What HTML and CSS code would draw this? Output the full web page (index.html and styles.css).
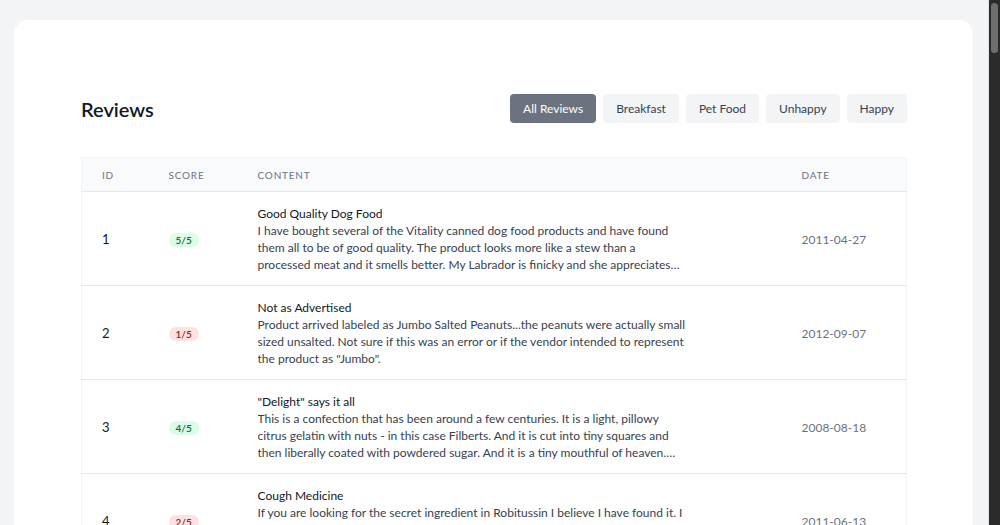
FILE: index.html
```html
<!DOCTYPE html>
<html lang="en">
<head>
<meta charset="utf-8">
<title>Reviews</title>
<link rel="stylesheet" href="styles.css">
</head>
<body>
<div class="viewport">
<main class="card">
  <header class="toolbar">
    <h1 class="title">Reviews</h1>
    <nav class="filters">
      <button class="filter active">All Reviews</button>
      <button class="filter">Breakfast</button>
      <button class="filter">Pet Food</button>
      <button class="filter">Unhappy</button>
      <button class="filter">Happy</button>
    </nav>
  </header>
  <table class="reviews">
    <colgroup>
      <col class="c-id"><col class="c-score"><col class="c-content"><col class="c-date">
    </colgroup>
    <thead>
      <tr><th>ID</th><th>Score</th><th>Content</th><th>Date</th></tr>
    </thead>
    <tbody>
      <tr>
        <td class="id">1</td>
        <td><span class="badge good">5/5</span></td>
        <td><div class="r-title">Good Quality Dog Food</div><div class="r-text">I have bought several of the Vitality canned dog food products and have found them all to be of good quality. The product looks more like a stew than a processed meat and it smells better. My Labrador is finicky and she appreciates this product better than most.</div></td>
        <td class="date">2011-04-27</td>
      </tr>
      <tr>
        <td class="id">2</td>
        <td><span class="badge bad">1/5</span></td>
        <td><div class="r-title">Not as Advertised</div><div class="r-text">Product arrived labeled as Jumbo Salted Peanuts...the peanuts were actually small sized unsalted. Not sure if this was an error or if the vendor intended to represent the product as "Jumbo".</div></td>
        <td class="date">2012-09-07</td>
      </tr>
      <tr>
        <td class="id">3</td>
        <td><span class="badge good">4/5</span></td>
        <td><div class="r-title">"Delight" says it all</div><div class="r-text">This is a confection that has been around a few centuries. It is a light, pillowy citrus gelatin with nuts - in this case Filberts. And it is cut into tiny squares and then liberally coated with powdered sugar. And it is a tiny mouthful of heaven. Not too chewy, and very flavorful.</div></td>
        <td class="date">2008-08-18</td>
      </tr>
      <tr>
        <td class="id">4</td>
        <td><span class="badge bad">2/5</span></td>
        <td><div class="r-title">Cough Medicine</div><div class="r-text">If you are looking for the secret ingredient in Robitussin I believe I have found it. I got this in addition to the Root Beer Extract I ordered (which was good) and made some cherry soda. The flavor is very medicinal.</div></td>
        <td class="date">2011-06-13</td>
      </tr>
      <tr>
        <td class="id">5</td>
        <td><span class="badge good">5/5</span></td>
        <td><div class="r-title">Great taffy</div><div class="r-text">Great taffy at a great price. There was a wide assortment of yummy taffy. Delivery was very quick. If your a taffy lover, this is a deal.</div></td>
        <td class="date">2012-10-21</td>
      </tr>
    </tbody>
  </table>
</main>
</div>
<div class="scrollbar"><div class="thumb"></div></div>
</body>
</html>
```

FILE: styles.css
```css
html { background: #f3f4f6; }
body {
  margin: 0;
  height: 100vh;
  display: flex;
  overflow: hidden;
  font-family: Lato, "Noto Sans", sans-serif;
  color: #111827;
}
.viewport {
  flex: 1;
  min-width: 0;
  overflow: hidden;
  padding: 20px 15px 40px 14px;
}
.scrollbar {
  width: 12px;
  flex: none;
  background: #2b2b2b;
  border-left: 1px solid #e2e3e5;
  box-sizing: border-box;
  padding: 3px 2px 0 2px;
}
.thumb {
  height: 50px;
  background: #6e6e6e;
  border-radius: 4px;
}
.card {
  background: #fff;
  border-radius: 14px;
  padding: 74px 66px 60px 67px;
}
.toolbar {
  display: flex;
  align-items: center;
  justify-content: space-between;
  margin-bottom: 34px;
}
.title {
  margin: 0;
  font-size: 20px;
  font-weight: 600;
  color: #111827;
}
.filters { display: flex; gap: 7px; }
.filter {
  font-family: inherit;
  font-size: 12px;
  height: 29px;
  padding: 0 13px;
  border: 0;
  border-radius: 4px;
  background: #f3f4f6;
  color: #374151;
}
.filter.active { background: #6b7280; color: #fff; }
.reviews {
  width: 100%;
  table-layout: fixed;
  border-collapse: collapse;
  border: 1px solid #f3f4f6;
}
.c-id { width: 67px; }
.c-score { width: 89px; }
.c-date { width: 125px; }
.reviews th {
  background: #f9fafb;
  height: 33px;
  padding: 0 20px;
  text-align: left;
  font-size: 10px;
  font-weight: 400;
  letter-spacing: 0.08em;
  text-transform: uppercase;
  color: #6b7280;
  border-bottom: 1px solid #e5e7eb;
}
.reviews td {
  padding: 13px 20px 12px;
  vertical-align: middle;
  border-bottom: 1px solid #e5e7eb;
  font-size: 12px;
  line-height: 17px;
}
.reviews td.id { font-size: 13px; color: #111827; }
.badge {
  display: inline-block;
  font-size: 10px;
  line-height: 14px;
  font-weight: 600;
  padding: 0 7px;
  border-radius: 999px;
}
.badge.good { background: #dcfce7; color: #166534; }
.badge.bad { background: #fee2e2; color: #991b1b; }
.r-title { color: #111827; }
.r-text {
  color: #374151;
  max-width: 430px;
  display: -webkit-box;
  -webkit-line-clamp: 3;
  -webkit-box-orient: vertical;
  overflow: hidden;
}
.date { color: #6b7280; font-size: 12px; }
```
